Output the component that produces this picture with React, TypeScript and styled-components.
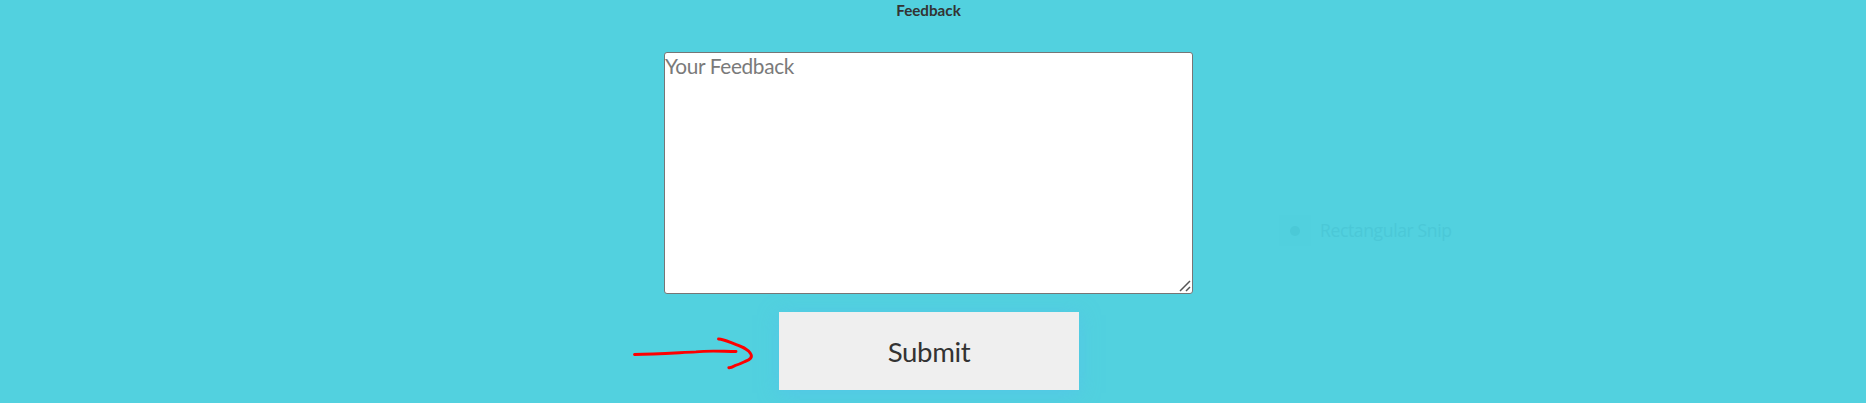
import React from "react";
import styled, { createGlobalStyle } from "styled-components";

const GlobalStyle = createGlobalStyle`
  * { box-sizing: border-box; }
  html, body { margin: 0; height: 100%; overflow: hidden; background: #52d1df; }
  body { font-family: Lato, "Liberation Sans", sans-serif; color: #333; }
`;

const Page = styled.main`
  position: relative;
  width: 1858px;
  height: 403px;
  display: flex;
  flex-direction: column;
  align-items: center;
`;

const Label = styled.label`
  height: 20px;
  margin: 0 1px 32px 0;
  font-size: 15.2px;
  font-weight: 700;
  line-height: 20px;
`;

const FieldWrap = styled.div`
  position: relative;
  width: 529px;
  height: 242px;
  margin: 0 1px 18px 0;
`;

const Field = styled.textarea`
  display: block;
  width: 100%;
  height: 100%;
  margin: 0;
  padding: 0;
  border: 1px solid #767676;
  border-radius: 3px;
  background: #fff;
  font-family: inherit;
  font-size: 20.8px;
  font-weight: 400;
  letter-spacing: -0.35px;
  line-height: 25px;
  resize: none;
  outline: none;
  &::placeholder { color: #7a7a7a; }
`;

const ResizeGrip = styled.svg`
  position: absolute;
  right: 2px;
  bottom: 2px;
  fill: none;
  stroke: #555;
  stroke-width: 1.5;
  pointer-events: none;
`;

const SubmitButton = styled.button`
  width: 300px;
  height: 78px;
  padding: 1px 0 0;
  border: 0;
  background: #efefef;
  color: #333;
  font-family: inherit;
  font-size: 27.6px;
  font-weight: 400;
  letter-spacing: -0.35px;
  line-height: 35px;
  box-shadow: 0 3px 18px rgba(85, 192, 236, 0.6);
`;

const Arrow = styled.svg`
  position: absolute;
  left: 630px;
  top: 333px;
  fill: none;
  stroke: #fe0000;
  stroke-width: 2.9;
  stroke-linecap: round;
  stroke-linejoin: round;
`;

const SnipHint = styled.div`
  position: absolute;
  left: 1279px;
  top: 215px;
  display: flex;
  align-items: center;
  gap: 9px;
  color: #4bc8d7;
  font-family: "Open Sans", sans-serif;
  font-size: 17.6px;
  font-weight: 400;
  letter-spacing: -0.4px;
  line-height: 31px;
`;

const SnipIcon = styled.span`
  display: grid;
  place-items: center;
  width: 32px;
  height: 31px;
  background: #51d0de;
  &::after {
    content: "";
    width: 10px;
    height: 10px;
    border-radius: 50%;
    background: #4bc9d7;
  }
`;

export default function App() {
  return (
    <>
      <GlobalStyle />
      <Page>
        <Label htmlFor="feedback">Feedback</Label>
        <FieldWrap>
          <Field id="feedback" placeholder="Your Feedback" />
          <ResizeGrip width="12" height="12" viewBox="0 0 12 12" aria-hidden="true">
            <path d="M1 11 L11 1 M7 11 L11 7" />
          </ResizeGrip>
        </FieldWrap>
        <SubmitButton type="button">Submit</SubmitButton>
        <Arrow width="130" height="40" viewBox="0 0 130 40" aria-hidden="true">
          <path d="M4.5 21.5 C25 21 46 19.8 66 18.9 C80 17.2 93 18.5 106 18.5" />
          <path d="M88.5 6 C94 6.3 99 9 105 11.2 C112 14 118 15.8 120.5 20.5 C123 24 120 27 115 28.5 C111 30.5 109 31.5 105.5 32.3 C102.5 34 101 35 98.8 34.7" />
        </Arrow>
        <SnipHint><SnipIcon />Rectangular Snip</SnipHint>
      </Page>
    </>
  );
}
